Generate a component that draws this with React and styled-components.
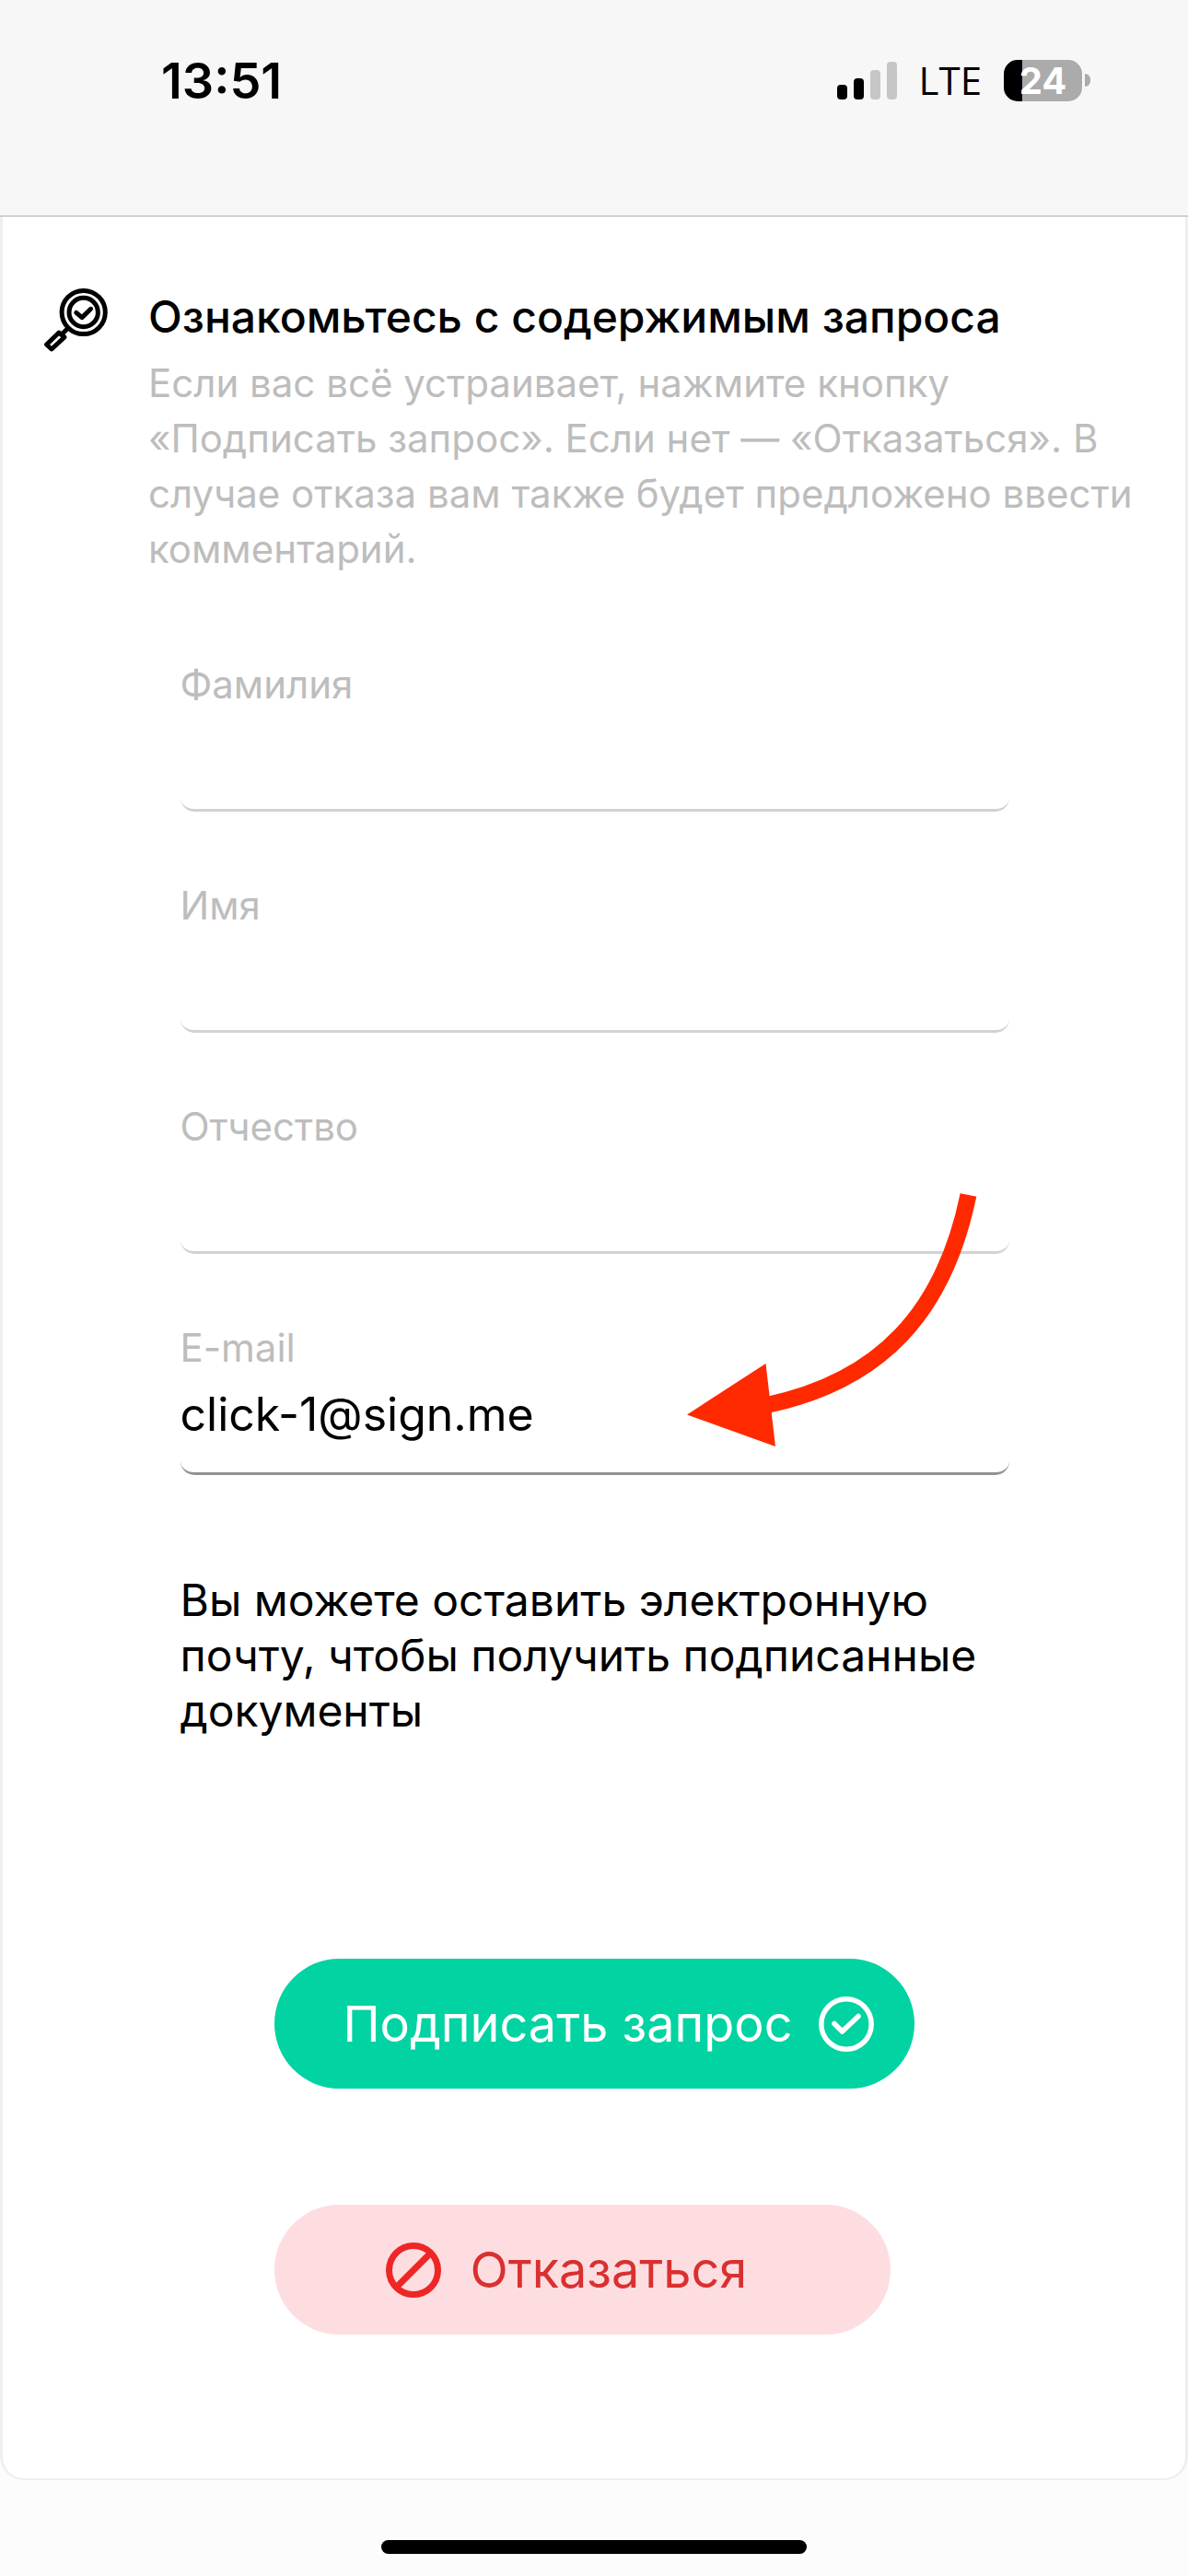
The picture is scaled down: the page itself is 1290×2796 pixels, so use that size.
import { useState } from 'react';
import styled, { createGlobalStyle } from 'styled-components';

const fields = [
  { id: 'surname', label: 'Фамилия', type: 'text', value: '' },
  { id: 'name', label: 'Имя', type: 'text', value: '' },
  { id: 'patronymic', label: 'Отчество', type: 'text', value: '' },
  { id: 'email', label: 'E-mail', type: 'email', value: 'click-1@sign.me' },
];

export default function App() {
  return (
    <Page>
      <GlobalStyle />
      <StatusBar />
      <Card>
        <Intro>
          <MagnifierIcon />
          <div>
            <Title>Ознакомьтесь с содержимым запроса</Title>
            <Description>
              Если вас всё устраивает, нажмите кнопку «Подписать запрос». Если
              нет — «Отказаться». В случае отказа вам также будет предложено
              ввести комментарий.
            </Description>
          </div>
        </Intro>
        <Form onSubmit={e => e.preventDefault()}>
          <Fields>
            {fields.map(field => (
              <TextField key={field.id} {...field} />
            ))}
            <Arrow />
          </Fields>
          <Hint>
            Вы можете оставить электронную почту, чтобы получить подписанные
            документы
          </Hint>
          <Actions>
            <SubmitButton type="submit">
              Подписать запрос
              <CheckIcon />
            </SubmitButton>
            <RejectButton type="button">
              <BanIcon />
              Отказаться
            </RejectButton>
          </Actions>
        </Form>
      </Card>
      <HomeArea>
        <HomeIndicator />
      </HomeArea>
    </Page>
  );
}

function StatusBar() {
  return (
    <Header>
      <Time>13:51</Time>
      <Indicators>
        <SignalIcon />
        <Network>LTE</Network>
        <Battery>
          <BatteryBody>24</BatteryBody>
          <BatteryTip />
        </Battery>
      </Indicators>
    </Header>
  );
}

function TextField({ id, label, type, value }) {
  const [text, setText] = useState(value);
  return (
    <Field>
      <Label htmlFor={id}>{label}</Label>
      <Input
        id={id}
        type={type}
        value={text}
        $filled={text !== ''}
        onChange={e => setText(e.target.value)}
      />
    </Field>
  );
}

function SignalIcon() {
  return (
    <svg width="65" height="41" viewBox="0 0 65 41" aria-hidden="true">
      <rect x="0" y="25" width="11" height="16" rx="4" fill="#000" />
      <rect x="18" y="18" width="11" height="23" rx="4" fill="#000" />
      <rect x="36" y="9" width="11" height="32" rx="4" fill="#c6c6c6" />
      <rect x="54" y="0" width="11" height="41" rx="4" fill="#c6c6c6" />
    </svg>
  );
}

function MagnifierIcon() {
  return (
    <IntroIcon viewBox="0 0 72 72" aria-hidden="true">
      <circle cx="44.7" cy="27" r="23.6" />
      <circle cx="44.7" cy="27" r="15.7" />
      <path
        d="M36.8 27.3 L43 32.6 L52.6 23.3"
        strokeLinecap="round"
        strokeLinejoin="round"
      />
      <path d="M28.5 43.5 L22 50" />
      <path d="M18 49 L24 54 L10 67 L4.5 62 Z" strokeLinejoin="round" />
    </IntroIcon>
  );
}

function CheckIcon() {
  return (
    <ButtonIcon viewBox="0 0 60 60" aria-hidden="true">
      <circle cx="30" cy="30" r="27.2" strokeWidth="5.5" />
      <path
        d="M17 29.5 L25.5 38 L43 21.5"
        strokeWidth="5.5"
        strokeLinecap="round"
        strokeLinejoin="round"
      />
    </ButtonIcon>
  );
}

function BanIcon() {
  return (
    <ButtonIcon viewBox="0 0 60 60" aria-hidden="true">
      <circle cx="30" cy="30" r="26.5" strokeWidth="7" />
      <path d="M12 48 L48 12" strokeWidth="7" />
    </ButtonIcon>
  );
}

function Arrow() {
  return (
    <ArrowSvg viewBox="740 1290 330 290" aria-hidden="true">
      <path
        d="M1050.5 1297 C1024 1425 955 1499 832 1525"
        fill="none"
        stroke="#ff2900"
        strokeWidth="18"
      />
      <path d="M745 1535.5 L830.5 1480 L841 1570 Z" fill="#ff2900" />
    </ArrowSvg>
  );
}

const GlobalStyle = createGlobalStyle`
  * {
    box-sizing: border-box;
  }
  body {
    margin: 0;
    background-color: #fcfcfc;
    color: #000;
    font-family: Inter, 'Liberation Sans', sans-serif;
    font-optical-sizing: none;
  }
  h1,
  p {
    margin: 0;
  }
`;
const Page = styled.div`
  display: flex;
  flex-direction: column;
  min-height: 100vh;
`;
const Header = styled.header`
  display: flex;
  justify-content: space-between;
  align-items: flex-start;
  height: 235px;
  padding: 56px 106px 0 175px;
  border-bottom: 1px solid #b0b0b0;
  background-color: #f7f7f7;
`;
const Time = styled.span`
  font-size: 54px;
  line-height: 64px;
  font-weight: 600;
`;
const Indicators = styled.div`
  display: flex;
  align-items: center;
  gap: 24px;
  height: 62px;
`;
const Network = styled.span`
  font-family: 'Open Sans', 'Noto Sans', sans-serif;
  font-size: 42px;
  line-height: 60px;
  font-weight: 500;
`;
const Battery = styled.div`
  display: flex;
  align-items: center;
  gap: 3px;
`;
const BatteryBody = styled.div`
  width: 85px;
  height: 45px;
  border-radius: 15px;
  background: linear-gradient(to right, #000 20px, #ababab 20px);
  color: #fff;
  font-size: 40px;
  line-height: 45px;
  font-weight: 700;
  text-align: center;
`;
const BatteryTip = styled.div`
  width: 6px;
  height: 14px;
  border-radius: 0 6px 6px 0;
  background-color: #ababab;
`;
const Card = styled.main`
  flex: 1;
  padding: 77px 42px 156px 43px;
  border: solid #efefef;
  border-width: 0 3px 2px;
  border-radius: 0 0 26px 26px;
  background-color: #fff;
`;
const Intro = styled.section`
  display: flex;
  align-items: flex-start;
  gap: 43px;
`;
const IntroIcon = styled.svg`
  flex: none;
  width: 72px;
  height: 72px;
  fill: none;
  stroke: #000;
  stroke-width: 5;
`;
const Title = styled.h1`
  margin-bottom: 10px;
  font-size: 48px;
  line-height: 64px;
  font-weight: 500;
`;
const Description = styled.p`
  color: #bdbdbd;
  font-size: 42px;
  line-height: 60px;
`;
const Form = styled.form`
  max-width: 900px;
  margin: 87px auto 0;
`;
const Fields = styled.div`
  position: relative;
  display: flex;
  flex-direction: column;
  gap: 72px;
`;
const Field = styled.div`
  display: flex;
  flex-direction: column;
`;
const Label = styled.label`
  color: #bdbdbd;
  font-size: 42px;
  line-height: 60px;
`;
const Input = styled.input`
  width: 100%;
  height: 108px;
  padding: 0 0 22px;
  border: 0 solid ${({ $filled }) => ($filled ? '#929292' : '#d2d2d2')};
  border-bottom-width: 3px;
  border-radius: 15px;
  outline: none;
  background-color: transparent;
  color: #000;
  font-family: inherit;
  font-size: 50px;
`;
const ArrowSvg = styled.svg`
  position: absolute;
  right: 25px;
  bottom: 21px;
  width: 330px;
  height: 290px;
  pointer-events: none;
`;
const Hint = styled.p`
  margin-top: 106px;
  font-size: 48px;
  line-height: 60px;
`;
const Actions = styled.div`
  display: flex;
  flex-direction: column;
  align-items: flex-start;
  gap: 126px;
  width: fit-content;
  margin: 239px auto 0;
`;
const Button = styled.button`
  display: flex;
  align-items: center;
  height: 141px;
  border: none;
  border-radius: 71px;
  font-family: inherit;
  font-size: 54px;
  line-height: 66px;
  cursor: pointer;
`;
const SubmitButton = styled(Button)`
  gap: 28px;
  padding: 0 44px 0 74px;
  background-color: #02d3a2;
  color: #fff;
`;
const RejectButton = styled(Button)`
  gap: 31px;
  padding: 0 156px 0 121px;
  background-color: #fedde0;
  color: #d93030;

  svg {
    stroke: #ee2626;
  }
`;
const ButtonIcon = styled.svg`
  flex: none;
  width: 60px;
  height: 60px;
  fill: none;
  stroke: currentColor;
`;
const HomeArea = styled.footer`
  display: flex;
  justify-content: center;
  padding: 65px 0 24px;
`;
const HomeIndicator = styled.div`
  width: 462px;
  height: 15px;
  border-radius: 8px;
  background-color: #000;
`;
